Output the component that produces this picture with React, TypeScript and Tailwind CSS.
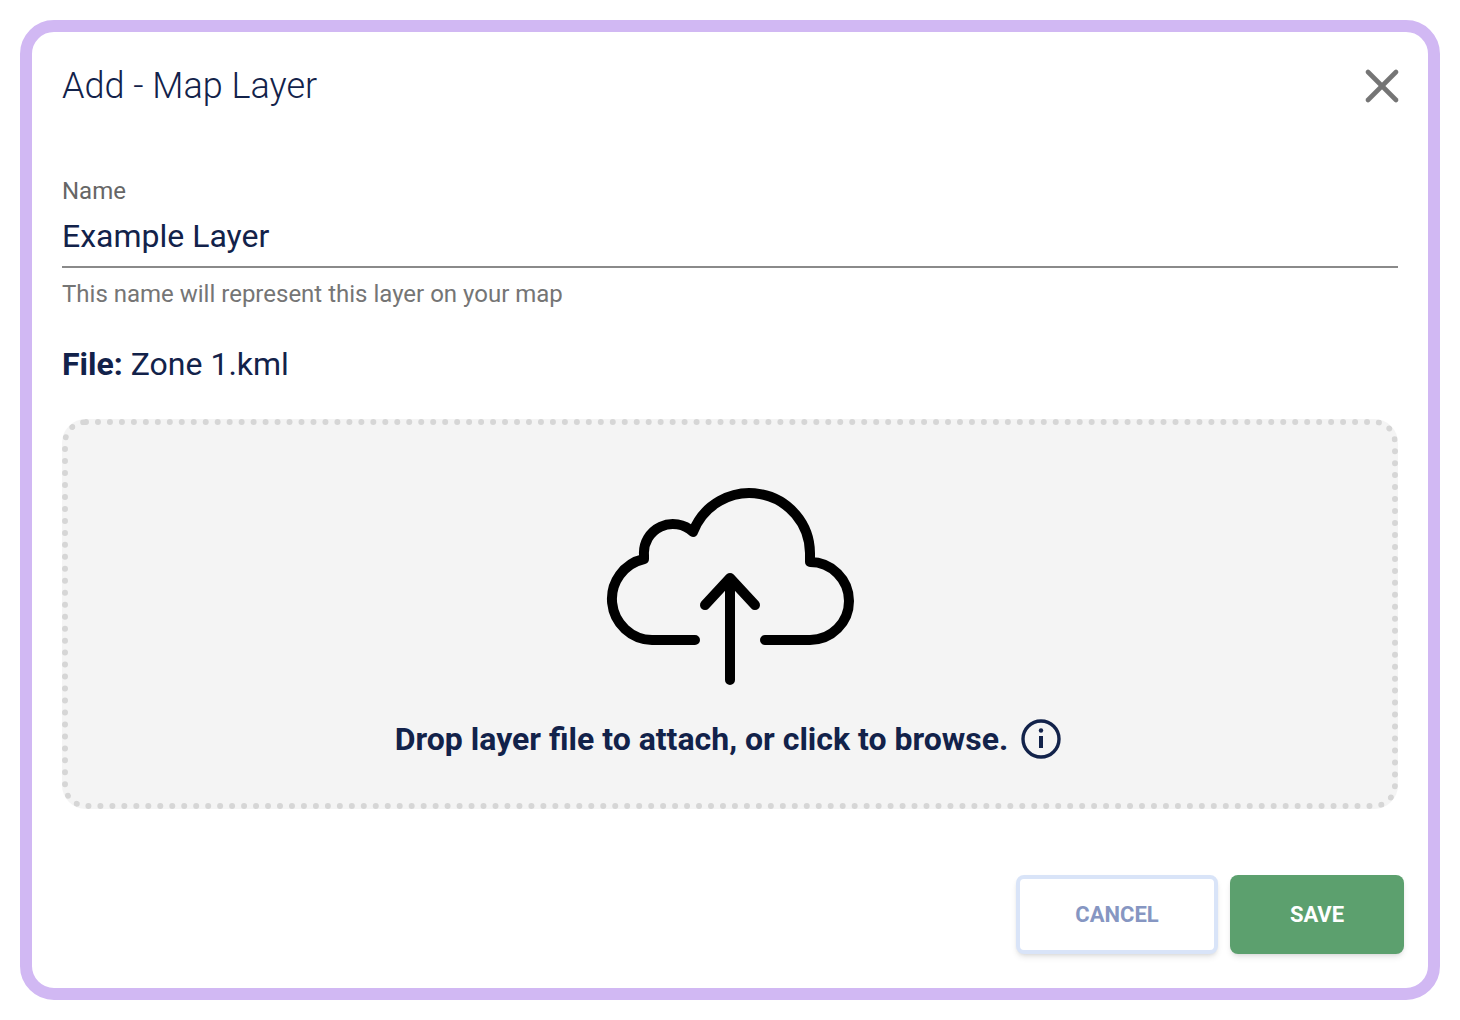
import React from "react";
import { X } from "lucide-react";

const CloudUpload = () => (
  <svg width="280" height="230" viewBox="0 0 280 230" fill="none" stroke="#000" strokeWidth="10" strokeLinecap="round" strokeLinejoin="round">
    <path d="M105 170H62A41 41 0 0 1 54 89V85A29 29 0 0 1 103 62A60.5 60.5 0 0 1 220 83V92A39 39 0 0 1 220 170H175" />
    <path d="M140 210V108M115 135L140 108L165 135" />
  </svg>
);

const InfoIcon = () => (
  <svg width="40" height="40" viewBox="0 0 40 40" fill="none" stroke="#12224a">
    <circle cx="20" cy="20" r="18" strokeWidth="3.4" />
    <path d="M20 17V29" strokeWidth="4" />
    <circle cx="20" cy="11.5" r="2.2" fill="#12224a" stroke="none" />
  </svg>
);

export default function App() {
  return (
    <div className="bg-white p-5 h-[1020px] font-['Roboto',sans-serif]">
      <div className="h-[980px] bg-white border-12 border-[#d1b8f3] rounded-[34px] pt-[30px] pl-[30px] pr-[30px]">
        <div className="flex justify-between items-center h-[48px]">
          <h1 className="text-[36px] font-light text-[#12224a] leading-[48px]">Add - Map Layer</h1>
          <X size={56} strokeWidth={2} color="#757575" className="mr-[-12px]" />
        </div>

        <div className="mt-[66px]">
          <label className="block text-[24px] leading-[30px] text-[#666666]">Name</label>
          <div className="border-b-2 border-[#8a8a8a] h-[54px] text-[32px] leading-[44px] text-[#12224a] mt-[8px]">Example Layer</div>
          <p className="text-[24px] leading-[30px] text-[#757575] mt-[11px]">This name will represent this layer on your map</p>
        </div>

        <p className="text-[32px] leading-[44px] text-[#12224a] mt-[33px]">
          <span className="font-bold">File:</span> Zone 1.kml
        </p>

        <div className="mt-[33px] h-[390px] bg-[#f4f4f4] border-[6px] border-dotted border-[#d6d6d6] rounded-[24px] flex flex-col items-center">
          <div className="mt-[45px]">
            <CloudUpload />
          </div>
          <div className="flex items-center gap-[13px] mt-[17px] ml-[-4px]">
            <span className="text-[32px] leading-[44px] font-bold text-[#12224a]">Drop layer file to attach, or click to browse.</span>
            <InfoIcon />
          </div>
        </div>

        <div className="flex justify-end gap-[12px] mt-[66px] mr-[-6px]">
          <button className="w-[202px] h-[79px] bg-white border-4 border-[#d9e4f8] rounded-[8px] shadow-md text-[22px] font-bold text-[#8696c2]">CANCEL</button>
          <button className="w-[174px] h-[79px] bg-[#5ca06e] rounded-[8px] shadow-md text-[22px] font-bold text-white">SAVE</button>
        </div>
      </div>
    </div>
  );
}
